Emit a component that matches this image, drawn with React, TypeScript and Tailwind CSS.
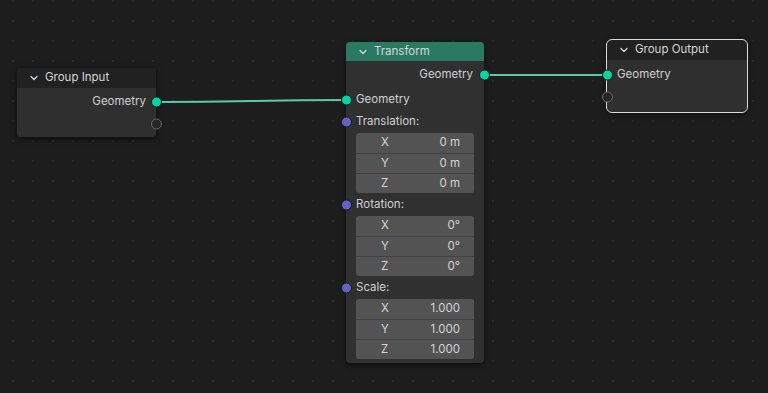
import { ChevronDown } from 'lucide-react';

type Field = { label: string; value: string };

const translation: Field[] = [
  { label: 'X', value: '0 m' },
  { label: 'Y', value: '0 m' },
  { label: 'Z', value: '0 m' },
];
const rotation: Field[] = [
  { label: 'X', value: '0°' },
  { label: 'Y', value: '0°' },
  { label: 'Z', value: '0°' },
];
const scale: Field[] = [
  { label: 'X', value: '1.000' },
  { label: 'Y', value: '1.000' },
  { label: 'Z', value: '1.000' },
];

// socket dot sitting on the node edge
function Socket({ side, kind }: { side: 'left' | 'right'; kind: 'geo' | 'vec' | 'empty' }) {
  const pos = side === 'left' ? 'left-[-5.5px]' : 'right-[-5.5px]';
  const look =
    kind === 'geo'
      ? 'bg-[#00d6a3] border-[#1a1a1a]'
      : kind === 'vec'
        ? 'bg-[#6363c7] border-[#1a1a1a]'
        : 'bg-[#262626] border-[#6b6b6b]';
  return (
    <span
      className={`absolute top-1/2 -translate-y-1/2 ${pos} w-[11px] h-[11px] rounded-full border ${look}`}
    />
  );
}

function Header({ title, green }: { title: string; green?: boolean }) {
  return (
    <div
      className={`flex items-center gap-[5px] pl-[11px] rounded-t-[4px] ${
        green ? 'bg-[#2a7a62] h-[19px]' : 'bg-[#212121] h-[20px]'
      } text-[#d6d6d6]`}
    >
      <ChevronDown size={12} strokeWidth={2.5} />
      <span>{title}</span>
    </div>
  );
}

function VectorBox({ fields }: { fields: Field[] }) {
  return (
    <div className="mx-[10px] rounded-[3px] bg-[#535353] overflow-hidden">
      {fields.map((f, i) => (
        <div
          key={f.label}
          className={`h-[20px] flex items-center justify-between pl-[25px] pr-[14px] text-[#d4d4d4] ${
            i > 0 ? 'border-t border-[#404040]' : ''
          }`}
        >
          <span>{f.label}</span>
          <span>{f.value}</span>
        </div>
      ))}
    </div>
  );
}

function App() {
  return (
    <div
      className="relative w-[768px] h-[393px] overflow-hidden bg-[#1d1d1d] bg-[radial-gradient(circle,#292929_1px,transparent_1.2px)] bg-[size:20px_20px] bg-[position:3px_-9px] text-[11.5px] text-[#d0d0d0]"
      style={{ fontFamily: 'Inter, "Noto Sans", "DejaVu Sans", sans-serif' }}
    >
      {/* links */}
      <svg className="absolute inset-0" width={768} height={393}>
        <path d="M157 102 C 250 102, 253 100, 346 100" stroke="#5ccaa8" strokeWidth={2} fill="none" />
        <path d="M484 75 L 607 75" stroke="#5ccaa8" strokeWidth={2} fill="none" />
      </svg>

      {/* Group Input */}
      <div className="absolute left-[17px] top-[68px] w-[139px] h-[69px] rounded-[4px] bg-[#2f2f2f] shadow-[0_2px_6px_rgba(0,0,0,0.6)]">
        <Header title="Group Input" />
        <div className="relative h-[22px] mt-[3px] flex items-center justify-end pr-[10px]">
          Geometry
          <Socket side="right" kind="geo" />
        </div>
        <div className="relative h-[22px]">
          <Socket side="right" kind="empty" />
        </div>
      </div>

      {/* Transform */}
      <div className="absolute left-[346px] top-[42px] w-[138px] h-[321px] rounded-[4px] bg-[#303030] shadow-[0_2px_6px_rgba(0,0,0,0.6)]">
        <Header title="Transform" green />
        <div className="relative h-[22px] mt-[3px] flex items-center justify-end pr-[11px]">
          Geometry
          <Socket side="right" kind="geo" />
        </div>
        <div className="relative h-[22px] mt-[3px] flex items-center pl-[10px]">
          Geometry
          <Socket side="left" kind="geo" />
        </div>
        <div className="relative h-[22px] flex items-center pl-[10px]">
          Translation:
          <Socket side="left" kind="vec" />
        </div>
        <VectorBox fields={translation} />
        <div className="relative h-[22px] mt-[1px] flex items-center pl-[10px]">
          Rotation:
          <Socket side="left" kind="vec" />
        </div>
        <VectorBox fields={rotation} />
        <div className="relative h-[22px] mt-[1px] flex items-center pl-[10px]">
          Scale:
          <Socket side="left" kind="vec" />
        </div>
        <VectorBox fields={scale} />
      </div>

      {/* Group Output (selected) */}
      <div className="absolute left-[607px] top-[40px] w-[140px] h-[72px] rounded-[5px] bg-[#2f2f2f] outline outline-1 outline-[#dcdcdc] shadow-[0_2px_6px_rgba(0,0,0,0.6)]">
        <Header title="Group Output" />
        <div className="relative h-[22px] mt-[4px] flex items-center pl-[10px]">
          Geometry
          <Socket side="left" kind="geo" />
        </div>
        <div className="relative h-[22px]">
          <Socket side="left" kind="empty" />
        </div>
      </div>
    </div>
  );
}

export default App;
